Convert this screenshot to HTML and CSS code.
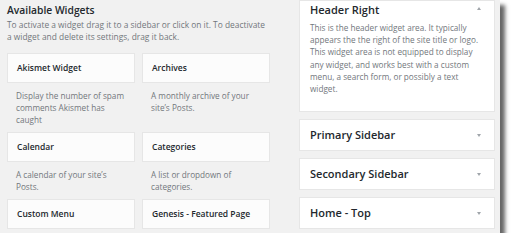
FILE: index.html
```html
<!DOCTYPE html>
<html>
<head>
<meta charset="utf-8">
<link rel="stylesheet" href="styles.css">
</head>
<body>
<div class="screen">
  <div class="available">
    <h2 class="heading">Available Widgets</h2>
    <p class="intro">To activate a widget drag it to a sidebar or click on it. To deactivate a widget and delete its settings, drag it back.</p>
    <div class="grid">
      <div class="widget">
        <div class="widget-title">Akismet Widget</div>
        <div class="widget-desc">Display the number of spam comments Akismet has caught</div>
      </div>
      <div class="widget">
        <div class="widget-title">Archives</div>
        <div class="widget-desc">A monthly archive of your site’s Posts.</div>
      </div>
      <div class="widget">
        <div class="widget-title">Calendar</div>
        <div class="widget-desc">A calendar of your site’s Posts.</div>
      </div>
      <div class="widget">
        <div class="widget-title">Categories</div>
        <div class="widget-desc">A list or dropdown of categories.</div>
      </div>
      <div class="widget">
        <div class="widget-title">Custom Menu</div>
      </div>
      <div class="widget">
        <div class="widget-title">Genesis - Featured Page</div>
      </div>
    </div>
  </div>
  <div class="sidebars">
    <div class="sidebar open">
      <div class="sidebar-head">
        <span class="sidebar-name">Header Right</span>
        <span class="arrow up"></span>
      </div>
      <p class="sidebar-desc">This is the header widget area. It typically appears the the right of the site title or logo. This widget area is not equipped to display any widget, and works best with a custom menu, a search form, or possibly a text widget.</p>
    </div>
    <div class="sidebar">
      <div class="sidebar-head">
        <span class="sidebar-name">Primary Sidebar</span>
        <span class="arrow down"></span>
      </div>
    </div>
    <div class="sidebar">
      <div class="sidebar-head">
        <span class="sidebar-name">Secondary Sidebar</span>
        <span class="arrow down"></span>
      </div>
    </div>
    <div class="sidebar">
      <div class="sidebar-head">
        <span class="sidebar-name">Home - Top</span>
        <span class="arrow down"></span>
      </div>
    </div>
  </div>
</div>
</body>
</html>
```

FILE: styles.css
```css
html, body {
  margin: 0;
  padding: 0;
  background: #ffffff;
}

body {
  font-family: "Open Sans", "Noto Sans", sans-serif;
  color: #23282d;
}

.screen {
  width: 500px;
  height: 233px;
  background: #f1f1f1;
  box-shadow: 5px 5px 4px rgba(0, 0, 0, 0.6);
  display: flex;
  overflow: hidden;
}

.available {
  width: 263px;
  margin-left: 7px;
}

.heading {
  margin: 0;
  padding-top: 1px;
  font-size: 10.3px;
  font-weight: 600;
  line-height: 18px;
  color: #23282d;
}

.intro {
  margin: 0;
  font-size: 8.4px;
  line-height: 12px;
  color: #72777c;
}

.grid {
  margin-top: 10px;
  display: grid;
  grid-template-columns: 128px 128px;
  column-gap: 7px;
}

.widget-title {
  height: 28px;
  background: #fcfcfc;
  border: 1px solid #e6e6e6;
  padding-left: 9px;
  font-size: 8.5px;
  font-weight: 600;
  line-height: 28px;
  color: #23282d;
}

.widget-desc {
  padding: 7px 5px 6px 9px;
  font-size: 8.2px;
  line-height: 12px;
  color: #72777c;
}

.sidebars {
  width: 196px;
  margin-left: 29px;
  display: flex;
  flex-direction: column;
  gap: 7px;
}

.sidebar {
  background: #ffffff;
  border: 1px solid #e6e6e6;
}

.sidebar-head {
  height: 30px;
  display: flex;
  align-items: center;
  justify-content: space-between;
  padding: 0 13px 0 10px;
}

.sidebar.open .sidebar-head {
  height: 18px;
  align-items: flex-start;
}

.sidebar-name {
  font-size: 11px;
  font-weight: 600;
  color: #23282d;
  line-height: 18px;
}

.arrow {
  width: 0;
  height: 0;
  border-left: 2.5px solid transparent;
  border-right: 2.5px solid transparent;
}

.arrow.down {
  border-top: 3px solid #a0a5aa;
}

.arrow.up {
  border-bottom: 3px solid #a0a5aa;
  margin-top: 6px;
}

.sidebar-desc {
  margin: 3px 0 0;
  padding: 0 10px 16px 10px;
  font-size: 8.2px;
  line-height: 12.2px;
  color: #72777c;
}
```
